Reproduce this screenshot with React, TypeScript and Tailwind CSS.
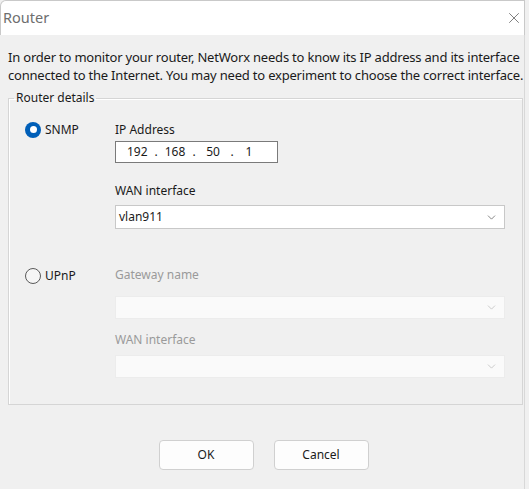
import { X, ChevronDown } from "lucide-react";

function Radio({ checked, label }: { checked?: boolean; label: string }) {
  return (
    <div className="flex items-center gap-[4px] w-[90px] h-[17px]">
      {checked ? (
        <span className="w-[16px] h-[16px] rounded-full bg-[#005fb8] flex items-center justify-center">
          <span className="w-[7px] h-[7px] rounded-full bg-white" />
        </span>
      ) : (
        <span className="w-[16px] h-[16px] rounded-full border border-[#5a5a5a] bg-[#f6f6f6]" />
      )}
      <span className="text-[#1a1a1a]">{label}</span>
    </div>
  );
}

function Select({ value, disabled }: { value?: string; disabled?: boolean }) {
  return (
    <div
      className={
        disabled
          ? "h-[23px] w-[390px] bg-[#fafafa] border border-[#ececec] flex items-center justify-between pl-[3px] pr-[6px]"
          : "h-[24px] w-[390px] bg-white border border-[#c8c8c8] flex items-center justify-between pl-[3px] pr-[6px]"
      }
    >
      <span>{value}</span>
      <ChevronDown size={13} strokeWidth={1.3} className={disabled ? "text-[#b8b8b8]" : "text-[#555]"} />
    </div>
  );
}

export default function App() {
  return (
    <div
      className="w-[529px] h-[489px] bg-[#f0f0f0] text-[12px] text-[#1a1a1a] flex flex-col overflow-hidden"
      style={{ fontFamily: '"Noto Sans", "Open Sans", sans-serif' }}
    >
      {/* Title bar */}
      <div className="h-[35px] bg-white border-t border-l border-r border-[#c9c9c9] rounded-tl-[6px] flex items-center justify-between pl-[2px] pr-[1px] shrink-0 mr-[4px]">
        <span className="text-[14.5px] text-[#6e6e6e]">Router</span>
        <X size={18} strokeWidth={1} className="text-[#555]" />
      </div>

      <div className="flex-1 border-r border-[#d8d8d8] mr-[4px] px-[8px] pt-[13px]">
        <p className="text-[13px] leading-[18px] tracking-[-0.2px] whitespace-nowrap">
          <span className="block">
            In order to monitor your router, NetWorx needs to know its IP address and its interface
          </span>
          <span className="block">
            connected to the Internet. You may need to experiment to choose the correct interface.
          </span>
        </p>

        {/* Group box */}
        <fieldset className="mt-[5px] border border-[#d5d5d5] shadow-[inset_1px_1px_0_#fff] pl-[16px] pr-[17px] pb-[22px] w-[514px] h-[316px]">
          <legend className="ml-[-11px] px-[2px] text-[#1a1a1a]">Router details</legend>

          <div className="flex items-start pt-[14px]">
            <Radio checked label="SNMP" />
            <div className="flex flex-col">
              <span className="leading-[17px]">IP Address</span>
              <div className="mt-[3px] w-[163px] h-[22px] bg-white border border-[#7a7a7a] flex items-center pl-[11px] text-[#1a1a1a]">
                <span className="w-[24px]">192</span>
                <span className="w-[10px] text-center">.</span>
                <span className="w-[28px] text-center">168</span>
                <span className="w-[10px] text-center">.</span>
                <span className="w-[28px] text-center">50</span>
                <span className="w-[10px] text-center">.</span>
                <span className="w-[24px] text-center">1</span>
              </div>
              <span className="mt-[19px] leading-[17px]">WAN interface</span>
              <div className="mt-[6px]">
                <Select value="vlan911" />
              </div>
            </div>
          </div>

          <div className="flex items-start pt-[37px]">
            <div className="pt-[1px]">
              <Radio label="UPnP" />
            </div>
            <div className="flex flex-col text-[#9a9a9a]">
              <span className="leading-[17px]">Gateway name</span>
              <div className="mt-[13px]">
                <Select disabled />
              </div>
              <span className="mt-[12px] leading-[17px]">WAN interface</span>
              <div className="mt-[7px]">
                <Select disabled />
              </div>
            </div>
          </div>
        </fieldset>

        {/* Buttons */}
        <div className="flex justify-center gap-[20px] mt-[35px] pl-[3px]">
          <button className="w-[95px] h-[30px] bg-[#fdfdfd] border border-[#d0d0d0] rounded-[4px] text-[#1a1a1a]">
            OK
          </button>
          <button className="w-[95px] h-[30px] bg-[#fdfdfd] border border-[#d0d0d0] rounded-[4px] text-[#1a1a1a]">
            Cancel
          </button>
        </div>
      </div>
    </div>
  );
}
